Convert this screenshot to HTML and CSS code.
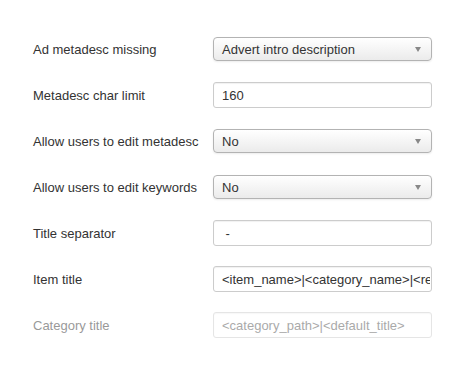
FILE: index.html
```html
<!DOCTYPE html>
<html>
<head>
<meta charset="utf-8">
<link rel="stylesheet" href="styles.css">
</head>
<body>
<form class="form">
  <div class="row">
    <label class="label">Ad metadesc missing</label>
    <span class="select"><span class="select-text">Advert intro description</span><span class="arrow"></span></span>
  </div>
  <div class="row">
    <label class="label">Metadesc char limit</label>
    <input class="input" type="text" value="160">
  </div>
  <div class="row">
    <label class="label">Allow users to edit metadesc</label>
    <span class="select"><span class="select-text">No</span><span class="arrow"></span></span>
  </div>
  <div class="row">
    <label class="label">Allow users to edit keywords</label>
    <span class="select"><span class="select-text">No</span><span class="arrow"></span></span>
  </div>
  <div class="row">
    <label class="label">Title separator</label>
    <input class="input" type="text" value=" - ">
  </div>
  <div class="row">
    <label class="label">Item title</label>
    <input class="input" type="text" value="<item_name>|<category_name>|<region_name>">
  </div>
  <div class="row row-disabled">
    <label class="label">Category title</label>
    <input class="input" type="text" value="<category_path>|<default_title>" disabled>
  </div>
</form>
</body>
</html>
```
FILE: styles.css
```css
html, body {
  margin: 0;
  padding: 0;
  background: #fff;
}
body {
  font-family: "Liberation Sans", Arial, sans-serif;
  font-size: 13px;
  color: #333;
}
.form {
  display: flex;
  flex-direction: column;
  gap: 20px;
  padding: 36px 0 0 33px;
  margin: 0;
}
.row {
  display: flex;
  align-items: center;
  height: 26px;
}
.label {
  width: 180px;
  flex: none;
  color: #333;
}
.select {
  position: relative;
  box-sizing: border-box;
  width: 219px;
  height: 24px;
  display: flex;
  align-items: center;
  padding: 0 8px;
  border: 1px solid #b3b3b3;
  border-radius: 4px;
  background: linear-gradient(#ffffff, #ebebeb);
  box-shadow: 0 1px 2px rgba(0,0,0,0.08);
  color: #333;
}
.select-text {
  flex: 1;
}
.arrow {
  width: 0;
  height: 0;
  border-left: 3.5px solid transparent;
  border-right: 3.5px solid transparent;
  border-top: 5px solid #888;
  margin-right: 2px;
  margin-top: 1px;
}
.input {
  box-sizing: border-box;
  width: 219px;
  height: 26px;
  padding: 0 1px 0 8px;
  margin: 0;
  border: 1px solid #ccc;
  border-radius: 3px;
  box-shadow: inset 0 1px 1px rgba(0,0,0,0.06);
  font-family: "Liberation Sans", Arial, sans-serif;
  font-size: 13px;
  color: #333;
  background: #fff;
  outline: none;
}
.row-disabled {
  opacity: 0.5;
}
.row-disabled .input {
  background: #fff;
  color: #555;
}
```
